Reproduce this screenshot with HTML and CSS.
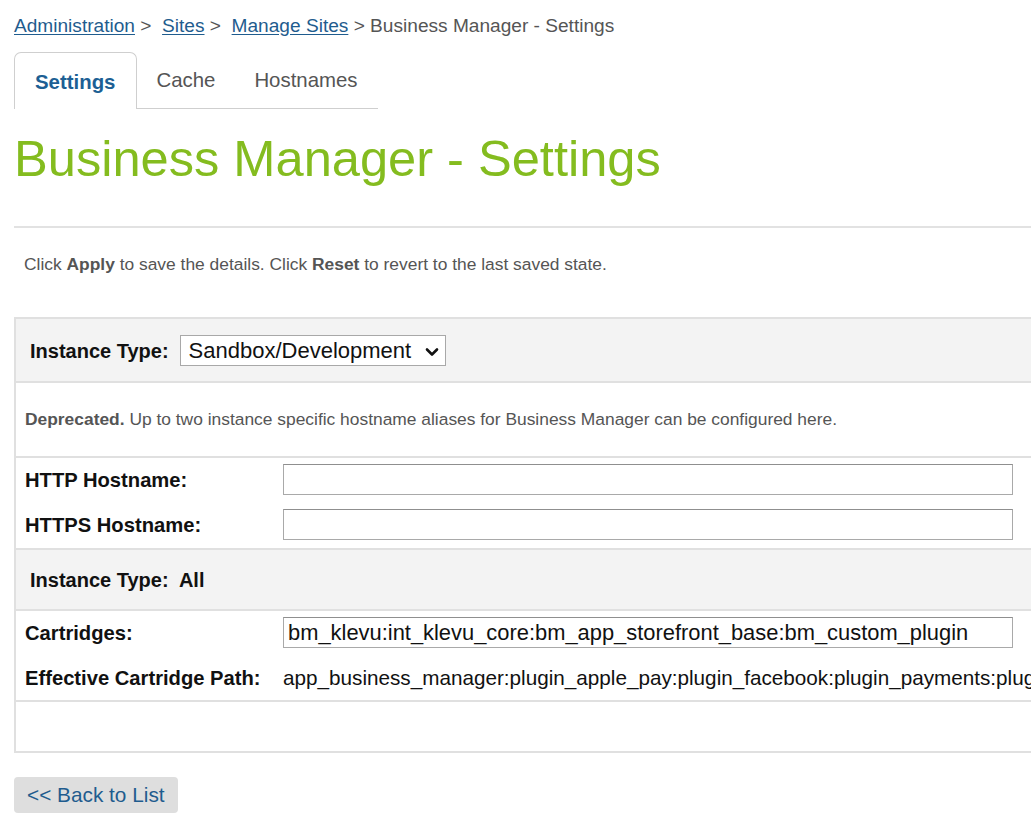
FILE: index.html
```html
<!DOCTYPE html>
<html lang="en">
<head>
<meta charset="utf-8">
<title>Business Manager - Settings</title>
<link rel="stylesheet" href="styles.css">
</head>
<body>
<nav class="crumbs">
  <a href="#">Administration</a><span class="sep">&nbsp;&gt;&nbsp;&nbsp;</span><a href="#">Sites</a><span class="sep">&nbsp;&gt;&nbsp;&nbsp;</span><a href="#">Manage Sites</a><span class="sep">&nbsp;&gt; Business Manager - Settings</span>
</nav>

<div class="tabs">
  <div class="tab tab-active">Settings</div>
  <div class="tab">Cache</div>
  <div class="tab">Hostnames</div>
</div>

<h1 class="title">Business Manager - Settings</h1>

<div class="rule"></div>

<p class="intro">Click <b>Apply</b> to save the details. Click <b>Reset</b> to revert to the last saved state.</p>

<div class="panel-clip">
  <div class="panel">
    <div class="band band-head">
      <span class="head-label">Instance Type:</span>
      <span class="select">
        <span class="select-text">Sandbox/Development</span>
        <svg class="chev" width="14" height="10" viewBox="0 0 14 10"><path d="M2 2.5 L7 7.5 L12 2.5" fill="none" stroke="#111" stroke-width="2.6" stroke-linecap="round" stroke-linejoin="round"/></svg>
      </span>
    </div>
    <div class="band band-note"><b>Deprecated.</b> Up to two instance specific hostname aliases for Business Manager can be configured here.</div>
    <div class="band fields fields-a">
      <div class="field"><span class="field-label">HTTP Hostname:</span><span class="input"></span></div>
      <div class="field"><span class="field-label">HTTPS Hostname:</span><span class="input"></span></div>
    </div>
    <div class="band band-head band-head2"><span class="head-label">Instance Type:&nbsp; All</span></div>
    <div class="band fields fields-b">
      <div class="field"><span class="field-label">Cartridges:</span><span class="input"><span class="input-text">bm_klevu:int_klevu_core:bm_app_storefront_base:bm_custom_plugin</span></span></div>
      <div class="field"><span class="field-label">Effective Cartridge Path:</span><span class="value">app_business_manager:plugin_apple_pay:plugin_facebook:plugin_payments:plugin_sitemap:bm_klevu:int_klevu_core:bm_app_storefront_base:bm_custom_plugin</span></div>
    </div>
    <div class="band band-empty"></div>
  </div>
</div>

<div class="actions">
  <a class="btn" href="#">&lt;&lt; Back to List</a>
</div>
</body>
</html>
```

FILE: styles.css
```css
html, body {
  overflow: hidden;
}
body {
  margin: 0;
  padding: 0 0 0 14px;
  font-family: "Liberation Sans", Arial, Helvetica, sans-serif;
  color: #111;
  background: #fff;
}

.crumbs {
  padding-top: 14px;
  font-size: 19.1px;
  line-height: 24px;
  color: #555;
  white-space: nowrap;
}
.crumbs a {
  color: #1f5c8e;
  text-decoration: underline;
  text-underline-offset: 2px;
}

.tabs {
  display: flex;
  align-items: flex-end;
  margin-top: 14px;
}
.tab {
  font-size: 20.4px;
  line-height: 24px;
  color: #555;
  padding: 16px 20px 16px 19px;
  border-bottom: 1px solid #cfcfcf;
}
.tab-active {
  font-weight: bold;
  color: #1d5f94;
  padding: 17px 21px 15px 20px;
  border: 1px solid #cfcfcf;
  border-bottom: none;
  border-radius: 7px 7px 0 0;
}

.title {
  margin: 20px 0 0;
  font-size: 50.6px;
  line-height: 60px;
  font-weight: normal;
  color: #84bc1f;
  white-space: nowrap;
}

.rule {
  margin-top: 37px;
  height: 2px;
  background: #e2e2e2;
}

.intro {
  margin: 25px 0 0;
  padding-left: 10px;
  font-size: 17.4px;
  line-height: 22px;
  color: #555;
}

.panel-clip {
  margin-top: 42px;
  overflow: hidden;
}
.panel {
  width: 1500px;
  border: 2px solid #e0e0e0;
  border-right: none;
}
.band {
  border-bottom: 2px solid #e0e0e0;
}
.band:last-child {
  border-bottom: none;
}
.band-head {
  display: flex;
  align-items: center;
  gap: 11px;
  background: #f3f3f3;
  padding: 16px 14px 15px;
}
.head-label {
  font-size: 20px;
  line-height: 24px;
  font-weight: bold;
  white-space: pre;
}
.band-head2 {
  padding: 18px 14px 17px;
}

.select {
  position: relative;
  display: flex;
  align-items: center;
  box-sizing: border-box;
  width: 266px;
  height: 31px;
  padding: 0 8px;
  background: #fff;
  border: 1px solid #a8a8a8;
}
.select-text {
  font-size: 22px;
  line-height: 24px;
  white-space: nowrap;
}
.chev {
  position: absolute;
  right: 6px;
  top: 11px;
}

.band-note {
  padding: 26px 9px;
  font-size: 17.4px;
  line-height: 21px;
  color: #555;
}
.band-note b {
  color: #555;
}

.fields {
  display: flex;
  flex-direction: column;
  gap: 14px;
}
.fields-a {
  padding: 6px 0 8px;
}
.fields-b {
  padding: 6px 0 7px;
}
.field {
  display: grid;
  grid-template-columns: 267px auto;
  align-items: center;
  min-height: 31px;
}
.field-label {
  padding-left: 9px;
  font-size: 20.2px;
  line-height: 24px;
  font-weight: bold;
  white-space: nowrap;
}
.input {
  display: flex;
  align-items: center;
  box-sizing: border-box;
  width: 730px;
  height: 31px;
  padding: 0 4px;
  background: #fff;
  border: 1px solid #a9a9a9;
  border-top-color: #8f8f8f;
}
.input-text {
  font-size: 21.9px;
  line-height: 24px;
  white-space: nowrap;
}
.value {
  font-size: 20.7px;
  line-height: 24px;
  white-space: nowrap;
}

.band-empty {
  height: 49px;
}

.actions {
  margin-top: 24px;
}
.btn {
  display: inline-block;
  padding: 6px 13px;
  font-size: 20.8px;
  line-height: 24px;
  color: #1f5c8e;
  text-decoration: none;
  background: #dedede;
  border-radius: 4px;
}
```
